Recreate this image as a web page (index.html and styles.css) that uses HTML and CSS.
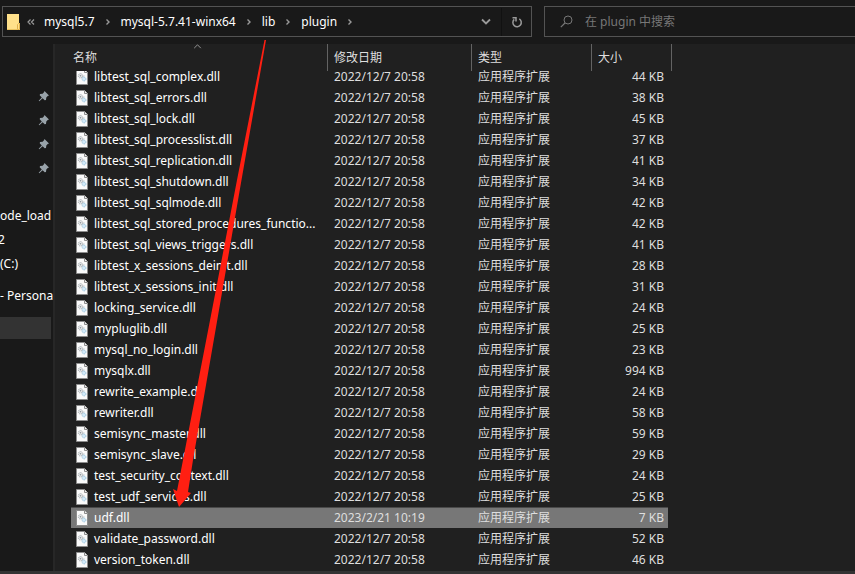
FILE: index.html
```html
<!DOCTYPE html>
<html lang="zh-CN">
<head>
<meta charset="utf-8">
<title>plugin</title>
<link rel="stylesheet" href="styles.css">
</head>
<body>
<svg class="defs" aria-hidden="true">
  <symbol id="dll" viewBox="0 0 12 16">
    <path d="M.5.5h8l3 3v12H.5z" fill="#fafafa" stroke="#8c8c8c"/>
    <path d="M8.500.5v3h3" fill="#eee" stroke="#8c8c8c"/>
    <circle cx="4.500" cy="6.800" r="2.200" fill="#e6e8ea" stroke="#a3a9ad" stroke-dasharray="1 .7"/>
    <circle cx="4.500" cy="6.800" r=".8" fill="#8a9196"/>
    <path d="M5.500 9 8 6.500" stroke="#b5bbbf"/>
    <circle cx="8" cy="10" r="1.900" fill="#d3eaf8" stroke="#94c0da" stroke-dasharray="1 .6"/>
  </symbol>
  <symbol id="pin" viewBox="0 0 12 12">
    <path d="M6.500 1 11 5.500 9.700 6 8.300 7.400 8 10 6.700 10.300 4.600 8.200 1.300 11.300.7 10.700 3.800 7.400 1.700 5.300 2 4 4.600 3.700 6 2.300z" fill="#98a2a9"/>
  </symbol>
  <symbol id="chev" viewBox="0 0 6 8">
    <path d="M1.500 1.500 4 4 1.500 6.500" fill="none" stroke="#9a9a9a" stroke-width="1.400"/>
  </symbol>
</svg>
<header class="toolbar">
  <nav class="address" aria-label="地址">
    <svg class="folder" viewBox="0 0 13 16"><path d="M0 0h12v9h1v7H0z" fill="#ffe08a"/><path d="M10.500 15.500v-5l1-1h1v6z" fill="#ffe08a" stroke="#dfb04a"/><path d="M0 15h10v1H0z" fill="#e9c25e"/></svg>
    <svg class="back" viewBox="0 0 8 8"><path d="M3.500 1.500 1 4l2.500 2.500M7 1.500 4.500 4 7 6.500" fill="none" stroke="#9a9a9a" stroke-width="1.200"/></svg>
    <a href="#">mysql5.7</a><svg class="chev"><use href="#chev"/></svg>
    <a href="#">mysql-5.7.41-winx64</a><svg class="chev"><use href="#chev"/></svg>
    <a href="#">lib</a><svg class="chev"><use href="#chev"/></svg>
    <a href="#">plugin</a><svg class="chev"><use href="#chev"/></svg>
    <button class="history" aria-label="历史记录"><svg viewBox="0 0 10 8"><path d="M1 1.500 5 5.500 9 1.500" fill="none" stroke="#9a9a9a" stroke-width="1.800"/></svg></button>
    <button class="refresh" aria-label="刷新"><svg viewBox="0 0 12 12"><path d="M8.300 2.900A4.200 4.200 0 1 1 3.200 3.400M1.500 1.800h3.500v3.700" fill="none" stroke="#9a9a9a" stroke-width="1.500"/></svg></button>
  </nav>
  <label class="search">
    <svg viewBox="0 0 13 13"><circle cx="8" cy="5" r="4" fill="none" stroke="#777"/><path d="M5 8 .8 12.200" stroke="#777" stroke-width="1.200"/></svg>
    <input type="text" aria-label="搜索" placeholder="在 plugin 中搜索">
  </label>
</header>
<main class="body">
  <aside class="sidebar">
    <ul class="pins">
      <li><svg><use href="#pin"/></svg></li>
      <li><svg><use href="#pin"/></svg></li>
      <li><svg><use href="#pin"/></svg></li>
      <li><svg><use href="#pin"/></svg></li>
    </ul>
    <ul class="places">
      <li>ode_load</li>
      <li class="tight">2</li>
      <li>(C:)</li>
      <li class="drive">- Persona</li>
      <li class="current"></li>
    </ul>
  </aside>
  <section class="files">
    <svg class="sort" viewBox="0 0 10 6"><path d="M1 5 5 1l4 4" fill="none" stroke="#aaa"/></svg>
    <table>
      <colgroup><col class="c-name"><col class="c-date"><col class="c-type"><col class="c-size"></colgroup>
      <thead><tr><th>名称</th><th>修改日期</th><th>类型</th><th>大小</th></tr></thead>
      <tbody id="rows"></tbody>
    </table>
  </section>
</main>
<footer class="edge"></footer>
<svg class="arrow" viewBox="0 0 855 574" aria-hidden="true"><path d="M264.500 40h1.500L241.500 180 219 310 193 460 188 492l3 1-12 14-6-18 4 2 6-31 29-150 25-130z" fill="#ff1f12"/></svg>
<script src="files.js"></script>
</body>
</html>
```
FILE: files.js
```js
const files = [
  ["libtest_sql_complex.dll", 44],
  ["libtest_sql_errors.dll", 38],
  ["libtest_sql_lock.dll", 45],
  ["libtest_sql_processlist.dll", 37],
  ["libtest_sql_replication.dll", 41],
  ["libtest_sql_shutdown.dll", 34],
  ["libtest_sql_sqlmode.dll", 42],
  ["libtest_sql_stored_procedures_functio...", 42],
  ["libtest_sql_views_triggers.dll", 41],
  ["libtest_x_sessions_deinit.dll", 28],
  ["libtest_x_sessions_init.dll", 31],
  ["locking_service.dll", 24],
  ["mypluglib.dll", 25],
  ["mysql_no_login.dll", 23],
  ["mysqlx.dll", 994],
  ["rewrite_example.dll", 24],
  ["rewriter.dll", 58],
  ["semisync_master.dll", 59],
  ["semisync_slave.dll", 29],
  ["test_security_context.dll", 24],
  ["test_udf_services.dll", 25],
  ["udf.dll", 7, "2023/2/21 10:19"],
  ["validate_password.dll", 52],
  ["version_token.dll", 46]
];
document.getElementById("rows").innerHTML = files.map(([name, size, date], i) => {
  const cls = i === 0 ? "partial" : date ? "selected" : "";
  return `<tr class="${cls}">
    <td><div class="cell name"><svg><use href="#dll"/></svg><span>${name}</span></div></td>
    <td><div class="cell">${date || "2022/12/7 20:58"}</div></td>
    <td><div class="cell">应用程序扩展</div></td>
    <td><div class="cell size">${size} KB</div></td></tr>`;
}).join("");
```
FILE: styles.css
```css
* { box-sizing: border-box; }
body {
  margin: 0;
  height: 100vh;
  display: flex;
  flex-direction: column;
  overflow: hidden;
  position: relative;
  background: #191919;
  color: #fff;
  font: 12px/20px "Noto Sans", "Noto Sans CJK SC", sans-serif;
}
ul { list-style: none; margin: 0; padding: 0; }
button { border: 0; background: none; padding: 0; display: flex; align-items: center; justify-content: center; }
.defs { display: none; }

.toolbar { display: flex; gap: 12px; height: 44px; padding: 6px 0 7px 2px; flex: none; }
.address { flex: 1; border: 1px solid #535353; display: flex; align-items: center; padding-left: 4px; min-width: 0; }
.address a { color: #fff; text-decoration: none; white-space: nowrap; }
.folder { width: 13px; height: 16px; }
.back { width: 8px; height: 8px; margin: 0 9px 0 7px; }
.chev { width: 6px; height: 8px; margin: 0 10px; flex: none; }
.history { width: 30px; height: 28px; margin-left: auto; }
.history svg { width: 10px; height: 8px; }
.refresh { width: 30px; height: 28px; border-left: 1px solid #111; }
.refresh svg { width: 12px; height: 12px; }
.search { width: 311px; flex: none; border: 1px solid #535353; border-right: 0; display: flex; align-items: center; gap: 12px; padding-left: 15px; }
.search svg { width: 13px; height: 13px; flex: none; }
.search input { border: 0; background: none; padding: 0; font: inherit; color: #fff; outline: 0; min-width: 0; flex: 1; }
.search input::placeholder { color: #777; opacity: 1; }

.body { flex: 1; display: flex; min-height: 0; }
.sidebar { width: 55px; flex: none; padding: 40px 1px 0 0; border-right: 2px solid #272727; white-space: nowrap; }
.pins li { height: 24px; display: flex; align-items: center; justify-content: flex-end; padding-right: 2px; }
.pins svg { width: 12px; height: 12px; }
.places { padding-top: 24px; }
.places li { height: 24px; line-height: 24px; }
.places .tight { text-indent: -2px; }
.places .drive { margin-top: 8px; }
.places .current { margin: 9px 1px 0 0; height: 22px; background: #333; }

.files { flex: 1; background: #202020; padding-left: 16px; overflow: hidden; position: relative; }
.sort { position: absolute; left: 138px; top: 0; width: 9px; height: 5px; }
table { border-collapse: separate; border-spacing: 0; table-layout: fixed; width: 601px; }
.c-name { width: 257px; }
.c-date { width: 144px; }
.c-type { width: 120px; }
.c-size { width: 80px; }
th { height: 27px; padding: 0 0 0 6px; font-weight: 400; text-align: left; color: #dedede; border-right: 1px solid #636363; }
th:first-child { padding-left: 2px; }
td { padding: 0 0 0 6px; height: 21px; color: #dedede; }
td:first-child { padding-left: 5px; color: #fff; }
td:last-child { border-right: 4px solid transparent; background-clip: padding-box; }
.cell { height: 21px; line-height: 21px; white-space: nowrap; }
.name { display: flex; align-items: center; gap: 6px; }
.name svg { width: 12px; height: 16px; flex: none; }
.size { text-align: right; padding-right: 4px; }
.partial td { height: 16px; }
.partial .cell { height: 16px; line-height: 11px; }
.partial .name { align-items: flex-start; }
.partial .name svg { margin-top: -2px; clip-path: inset(2px 0 0); }
.selected td { background-color: #777; box-shadow: inset 0 1px #4a4a4a; }
.edge { height: 3px; flex: none; background: #333; }
.arrow { position: absolute; left: 0; top: 0; width: 855px; height: 574px; pointer-events: none; }
```
